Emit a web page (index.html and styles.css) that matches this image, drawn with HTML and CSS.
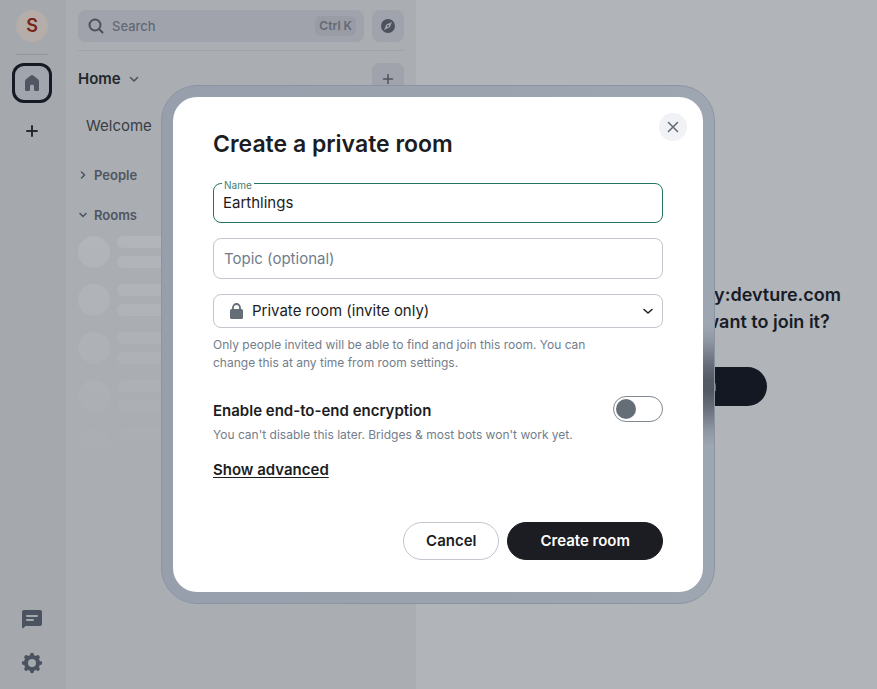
FILE: index.html
```html
<!DOCTYPE html>
<html lang="en">
<head>
<meta charset="utf-8">
<meta name="viewport" content="width=device-width, initial-scale=1">
<title>Create a private room</title>
<link rel="stylesheet" href="styles.css">
</head>
<body>
<div class="app">
  <nav class="rail" aria-label="Spaces">
    <button class="avatar" type="button">S</button>
    <hr class="divider">
    <button class="space space-active" type="button" aria-label="Home">
      <svg width="24" height="24" viewBox="0 0 24 24" fill="currentColor"><path d="M5 10.300c0-.7.3-1.300.8-1.700l4.900-4.100a2 2 0 0 1 2.600 0l4.900 4.100c.5.400.8 1 .8 1.700V18.500a1.500 1.500 0 0 1-1.500 1.500h-2a1.500 1.500 0 0 1-1.500-1.500V15.500a2 2 0 0 0-4 0v3A1.500 1.500 0 0 1 8.500 20h-2A1.500 1.500 0 0 1 5 18.500z"/></svg>
    </button>
    <button class="space" type="button" aria-label="Create a space">
      <svg width="24" height="24" viewBox="0 0 24 24" fill="none" stroke="currentColor" stroke-width="2" stroke-linecap="round"><path d="M12 7v10M7 12h10"/></svg>
    </button>
    <div class="rail-end">
      <button class="rail-tool" type="button" aria-label="Threads">
        <svg width="24" height="24" viewBox="0 0 24 24" fill="currentColor" fill-rule="evenodd"><path d="M2 5a2 2 0 0 1 2-2h16a2 2 0 0 1 2 2v12a2 2 0 0 1-2 2H5.500l-2 2c-.6.6-1.500.2-1.500-.6zM7 8a1 1 0 0 0 0 2h10a1 1 0 0 0 0-2zM7 12a1 1 0 0 0 0 2h6a1 1 0 0 0 0-2z"/></svg>
      </button>
      <button class="rail-tool" type="button" aria-label="Settings">
        <svg width="24" height="24" viewBox="0 0 24 24"><g fill="none" stroke="currentColor"><circle cx="12" cy="12" r="6" stroke-width="4"/><path d="M12 4.200v-.4M12 20.200v-.4M4.200 12h-.4M20.200 12h-.4M6.500 6.500l-.3-.3M17.500 17.500l.3.3M17.500 6.500l.3-.3M6.500 17.500l-.3.3" stroke-width="4" stroke-linecap="round"/></g></svg>
      </button>
    </div>
  </nav>

  <aside class="panel">
    <div class="search-row">
      <button class="search" type="button">
        <svg width="20" height="20" viewBox="0 0 20 20" fill="none" stroke="currentColor" stroke-width="2" stroke-linecap="round"><circle cx="9" cy="9" r="5.500"/><path d="M13.200 13.200L16.500 16.500"/></svg>
        <span class="search-text">Search</span>
        <kbd class="keys">Ctrl K</kbd>
      </button>
      <button class="tile" type="button" aria-label="Explore rooms">
        <svg width="16" height="16" viewBox="0 0 16 16" fill="currentColor" fill-rule="evenodd"><path d="M8 1a7 7 0 1 0 0 14A7 7 0 0 0 8 1zM12 4L9.800 9.300 4 12 6.300 6.500zM8 7.100a.9.9 0 1 0 0 1.800.9.9 0 0 0 0-1.800z"/></svg>
      </button>
    </div>
    <div class="home-row">
      <button class="home" type="button">Home
        <svg width="12" height="12" viewBox="0 0 12 12" fill="none" stroke="currentColor" stroke-width="1.500" stroke-linecap="round" stroke-linejoin="round"><path d="M2.500 4.500L6 8l3.500-3.500"/></svg>
      </button>
      <button class="tile" type="button" aria-label="Add">
        <svg width="16" height="16" viewBox="0 0 16 16" fill="none" stroke="currentColor" stroke-width="1.500" stroke-linecap="round"><path d="M8 3.500v9M3.500 8h9"/></svg>
      </button>
    </div>
    <a class="welcome" href="#">Welcome</a>
    <button class="section" type="button">
      <svg width="10" height="10" viewBox="0 0 10 10" fill="none" stroke="currentColor" stroke-width="1.600" stroke-linecap="round" stroke-linejoin="round"><path d="M3.500 2l3 3-3 3"/></svg>
      People
    </button>
    <button class="section" type="button">
      <svg width="10" height="10" viewBox="0 0 10 10" fill="none" stroke="currentColor" stroke-width="1.600" stroke-linecap="round" stroke-linejoin="round"><path d="M2 3.500l3 3 3-3"/></svg>
      Rooms
    </button>
    <div class="skeleton" aria-hidden="true">
      <div class="ghost"><i></i><b></b><b></b></div>
      <div class="ghost"><i></i><b></b><b></b></div>
      <div class="ghost"><i></i><b></b><b></b></div>
      <div class="ghost"><i></i><b></b><b></b></div>
      <div class="ghost"><i></i><b></b><b></b></div>
    </div>
  </aside>

  <main class="preview">
    <h2 class="preview-title">#matrix-docker-ansible-deploy:devture.com can't be previewed. Do you want to join it?</h2>
    <button class="join" type="button">Join the discussion</button>
  </main>
</div>

<div class="overlay">
  <div class="frame">
    <form class="dialog" role="dialog" aria-labelledby="title">
      <button class="close" type="button" aria-label="Close">
        <svg width="20" height="20" viewBox="0 0 20 20" fill="none" stroke="currentColor" stroke-width="1.600" stroke-linecap="round"><path d="M5.500 5.500l9 9M14.500 5.500l-9 9"/></svg>
      </button>
      <h1 class="title" id="title">Create a private room</h1>
      <div class="field field-focus">
        <label class="float" for="name">Name</label>
        <input class="text" id="name" type="text" value="Earthlings">
      </div>
      <div class="field">
        <input class="text text-topic" id="topic" type="text" placeholder="Topic (optional)" aria-label="Topic (optional)">
      </div>
      <div class="field">
        <svg class="lock" width="14" height="16" viewBox="0 0 14 16" fill="currentColor"><rect x="0" y="6" width="13" height="10" rx="1.500"/><path d="M3 7V4.500a3.500 3.500 0 0 1 7 0V7" fill="none" stroke="currentColor" stroke-width="1.800"/></svg>
        <select class="choice" id="access" aria-label="Room visibility"><option>Private room (invite only)</option></select>
        <svg class="arrow" width="12" height="12" viewBox="0 0 12 12" fill="none" stroke="currentColor" stroke-width="1.500" stroke-linecap="round" stroke-linejoin="round"><path d="M2 4.500l4 3.500 4-3.500"/></svg>
      </div>
      <p class="hint">Only people invited will be able to find and join this room. You can change this at any time from room settings.</p>
      <div class="toggle-row">
        <label class="toggle-label" for="e2ee">Enable end-to-end encryption</label>
        <input class="switch" id="e2ee" type="checkbox" role="switch">
      </div>
      <p class="note">You can't disable this later. Bridges &amp; most bots won't work yet.</p>
      <button class="advanced" type="button">Show advanced</button>
      <div class="actions">
        <button class="button" type="button">Cancel</button>
        <button class="button button-primary" type="submit">Create room</button>
      </div>
    </form>
  </div>
</div>
</body>
</html>
```
FILE: styles.css
```css
* { box-sizing: border-box; }

body {
  margin: 0;
  font-family: Inter, "Liberation Sans", sans-serif;
  font-size: 15px;
  line-height: 20px;
  color: #1b1d22;
}

button, input, select, kbd { font: inherit; color: inherit; }
button { margin: 0; padding: 0; border: 0; background: none; }
svg { display: block; flex: none; }

/* App behind the dialog */
.app {
  display: grid;
  grid-template-columns: 66px 350px 1fr;
  min-height: 100vh;
  background: #b1b4b9;
}

.rail {
  display: flex;
  flex-direction: column;
  align-items: center;
  padding: 10px 2px 14px 0;
  background: #a5a8ac;
  color: #4b5360;
}

.avatar {
  width: 32px;
  height: 32px;
  border-radius: 50%;
  background: #b5adaa;
  color: #792416;
  font-size: 18px;
  font-weight: 600;
}

.divider {
  width: 32px;
  height: 1px;
  margin: 12px 0 8px;
  border: 0;
  background: #93979d;
}

.space {
  display: grid;
  place-items: center;
  width: 40px;
  height: 40px;
  margin-bottom: 8px;
  color: #252a33;
}

.space-active {
  border: 3px solid #161a24;
  border-radius: 12px;
  background: #a1a6ae;
  color: #4f5661;
}

.rail-end {
  display: flex;
  flex-direction: column;
  gap: 20px;
  margin-top: auto;
}

.panel {
  display: flex;
  flex-direction: column;
  padding: 10px 12px;
  background: #aaadb1;
}

.search-row {
  display: flex;
  gap: 8px;
  padding-bottom: 8px;
  border-bottom: 1px solid #a0a4a9;
}

.search {
  display: flex;
  flex: 1;
  align-items: center;
  height: 32px;
  padding: 0 8px;
  border-radius: 8px;
  background: #a0a3ac;
  color: #636a75;
  font-size: 13px;
  font-weight: 500;
}
.search svg { color: #4b515d; }
.search-text { flex: 1; padding-left: 6px; text-align: left; }

.keys {
  padding: 0 4px;
  border-radius: 6px;
  background: #999ca5;
  font-size: 12px;
  font-weight: 600;
}

.tile {
  display: grid;
  place-items: center;
  width: 32px;
  height: 32px;
  border-radius: 8px;
  background: #a0a3ac;
  color: #4b515d;
}

.home-row {
  display: flex;
  align-items: center;
  justify-content: space-between;
  padding-top: 12px;
}
.home { display: flex; align-items: center; gap: 7px; font-weight: 600; color: #23272e; }
.home svg { color: #4b515d; }

.welcome {
  margin: 21px 8px 29px;
  color: #383d45;
  text-decoration: none;
}

.section {
  display: flex;
  align-items: center;
  gap: 6px;
  margin-bottom: 20px;
  font-size: 13px;
  font-weight: 600;
  color: #4f5661;
}

.skeleton {
  display: grid;
  gap: 16px;
  margin-top: -9px;
  mask-image: linear-gradient(#000, transparent 110%);
}
.ghost {
  display: grid;
  grid-template: 12px 12px / 32px 1fr;
  gap: 8px 7px;
  height: 32px;
}
.ghost i { grid-row: span 2; width: 32px; height: 32px; border-radius: 50%; background: #b2b5ba; }
.ghost b { height: 12px; border-radius: 6px; background: #b2b5ba; }

.preview {
  display: flex;
  flex-direction: column;
  align-items: center;
  justify-content: center;
  padding-bottom: 3px;
  color: #171c26;
}
.preview-title {
  max-width: 420px;
  margin: 0 0 32px;
  font-size: 18px;
  font-weight: 600;
  line-height: 27px;
  text-align: center;
}
.join {
  height: 39px;
  padding: 0 50px;
  border-radius: 20px;
  background: #141822;
  color: #b1b4b9;
  font-weight: 600;
}

/* Dialog */
.overlay {
  position: fixed;
  inset: 0;
  display: grid;
  place-items: center;
  padding-right: 1px;
}

/* Frosted rim, darker where the join button sits beneath it */
.frame {
  width: 554px;
  max-width: 100%;
  padding: 11px;
  border: 1px solid #8a95a4;
  border-radius: 36px;
  background:
    radial-gradient(120px 60px at 100% 58%, #545a64 10%, rgba(84, 90, 100, 0.75) 35%, rgba(84, 90, 100, 0.2) 75%, rgba(84, 90, 100, 0)),
    linear-gradient(90deg, #969fab, #9ea6b1);
}

.dialog {
  position: relative;
  display: flex;
  flex-direction: column;
  padding: 32px 40px;
  border-radius: 24px;
  background: #fff;
}

.close {
  position: absolute;
  top: 16px;
  right: 16px;
  display: grid;
  place-items: center;
  width: 28px;
  height: 28px;
  border-radius: 50%;
  background: #f0f2f5;
  color: #656d77;
}

.title {
  margin: 0 0 24px;
  font-size: 23px;
  font-weight: 600;
  line-height: 30px;
}

.field {
  position: relative;
  display: flex;
  align-items: center;
  margin-bottom: 15px;
  border: 1px solid #c1c6cd;
  border-radius: 8px;
}
.field-focus { border-color: #237562; }

.float {
  position: absolute;
  top: -5px;
  left: 8px;
  padding: 0 2px;
  background: #fff;
  color: #43806f;
  font-size: 10px;
  line-height: 12px;
}

.text {
  width: 100%;
  height: 38px;
  padding: 0 9px 2px;
  border: 0;
  border-radius: 8px;
  outline: 0;
  background: none;
}
.text-topic { height: 39px; padding: 0 10px; }
.text::placeholder { color: #717d8d; opacity: 1; }

.choice {
  width: 100%;
  height: 32px;
  padding: 0 38px;
  border: 0;
  border-radius: 8px;
  outline: 0;
  appearance: none;
  background: none;
}
.lock { position: absolute; left: 16px; color: #656d77; }
.arrow { position: absolute; right: 8px; pointer-events: none; }

.hint, .note {
  margin: 0;
  color: #737d8c;
  font-size: 12px;
  line-height: 18px;
}
.hint { max-width: 380px; margin: -7px 0 24px; }

.toggle-row {
  display: flex;
  align-items: center;
  justify-content: space-between;
}
.toggle-label { padding-top: 4px; font-weight: 600; }

.switch {
  display: flex;
  align-items: center;
  width: 50px;
  height: 26px;
  margin: 0;
  padding: 2px;
  border: 1px solid #818890;
  border-radius: 13px;
  appearance: none;
}
.switch::before {
  content: "";
  width: 20px;
  height: 20px;
  border-radius: 50%;
  background: #656d77;
}
.switch:checked { justify-content: flex-end; }

.note { margin: 4px 0 16px; }

.advanced {
  align-self: flex-start;
  font-weight: 600;
  text-decoration: underline;
  text-underline-offset: 2px;
}

.actions {
  display: flex;
  justify-content: flex-end;
  gap: 8px;
  margin-top: 42px;
}
.button {
  height: 38px;
  padding: 0 22px;
  border: 1px solid #c1c6cd;
  border-radius: 19px;
  font-weight: 600;
}
.button-primary {
  padding: 0 32px;
  border-color: #1b1d22;
  background: #1b1d22;
  color: #fff;
}
```
